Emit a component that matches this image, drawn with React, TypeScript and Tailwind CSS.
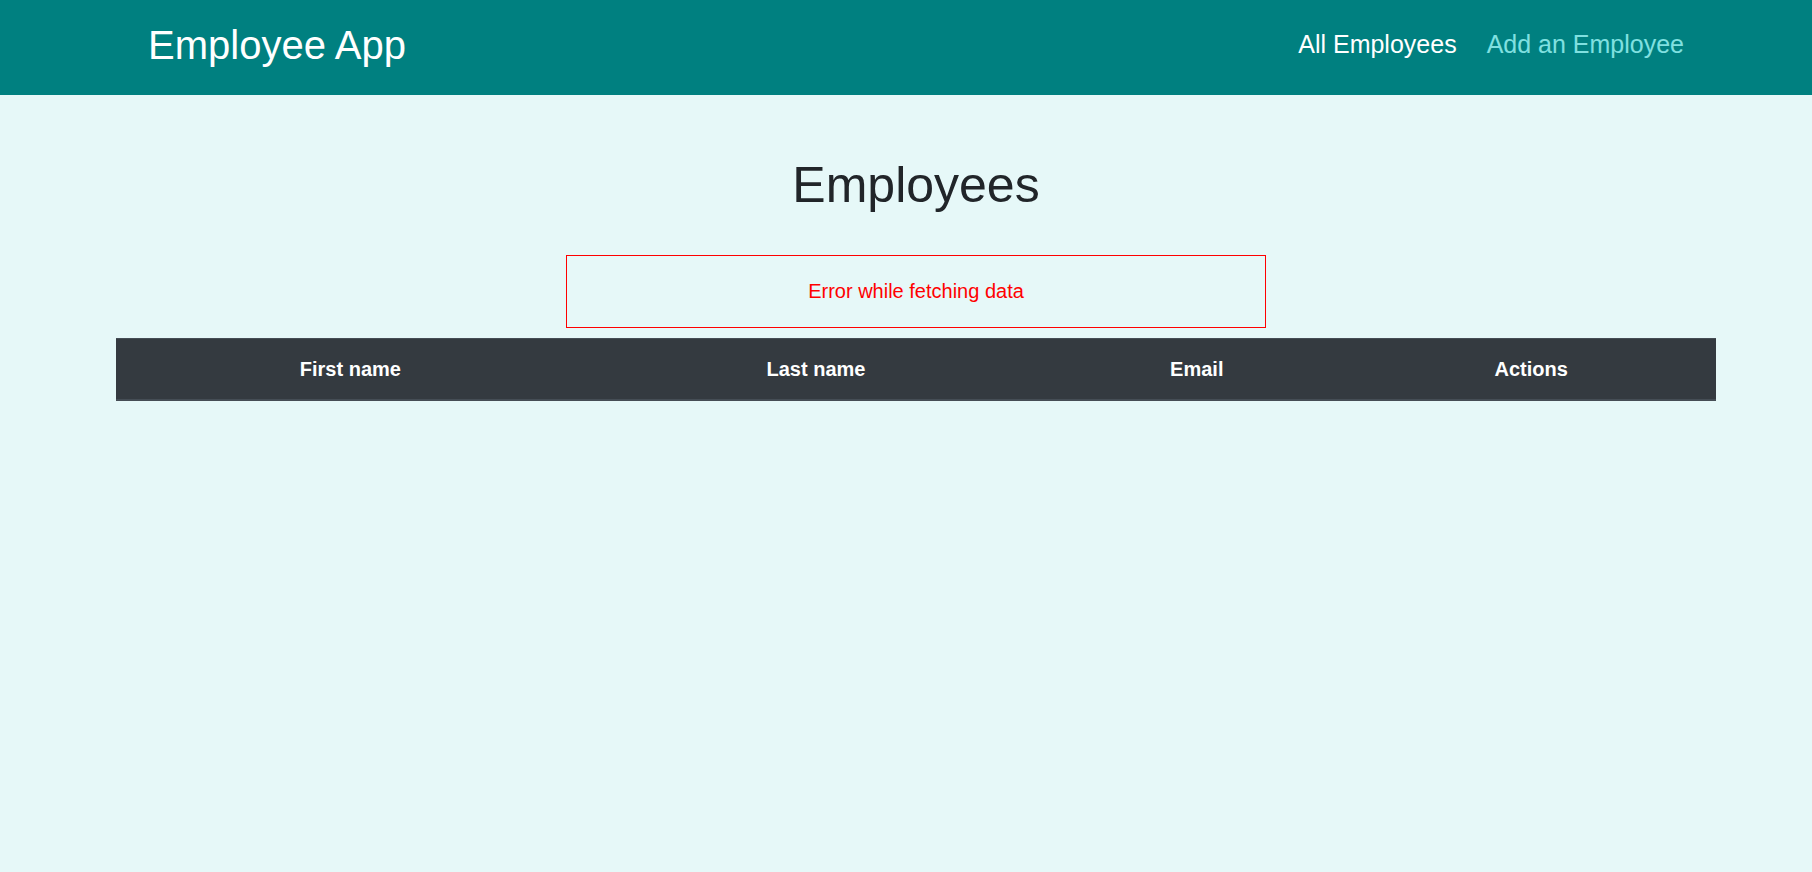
const columns = [
  { label: 'First name', width: 'w-[29.3%]' },
  { label: 'Last name', width: 'w-[28.9%]' },
  { label: 'Email', width: 'w-[18.7%]' },
  { label: 'Actions', width: 'w-[23.1%]' },
];

export default function App() {
  return (
    <div className="min-h-screen bg-[#e6f8f8] font-['Liberation_Sans',Arial,sans-serif] text-[#212529]">
      <header className="bg-[#008080]">
        <div className="mr-[96px] ml-[116px] flex items-start justify-between px-8 pt-[15px] pb-5">
          <a href="#" className="text-[40px] leading-[60px] text-white">Employee App</a>
          <nav className="flex gap-[30px] pt-[9px] text-[25px] leading-[40px]">
            <a href="#employees" className="text-white">All Employees</a>
            <a href="#add" className="text-[#80e0e0]">Add an Employee</a>
          </nav>
        </div>
      </header>
      <main className="mr-[96px] ml-[116px] pt-[60px] text-center">
        <h1 className="text-[50px] leading-[60px]">Employees</h1>
        <p role="alert" className="mx-auto mt-10 w-[700px] max-w-full border border-[#ff0000] pt-5 pb-[21px] text-[20px] leading-[30px] text-[#ff0000]">
          Error while fetching data
        </p>
        <table className="mt-[10px] w-full table-fixed border-separate border-spacing-0 bg-[#343a40] text-[20px] leading-[30px] text-white">
          <thead>
            <tr>
              {columns.map((c) => (
                <th key={c.label} scope="col" className={`${c.width} border-t border-b-2 border-[#454d55] py-[15px] font-bold`}>
                  {c.label}
                </th>
              ))}
            </tr>
          </thead>
        </table>
      </main>
    </div>
  );
}
